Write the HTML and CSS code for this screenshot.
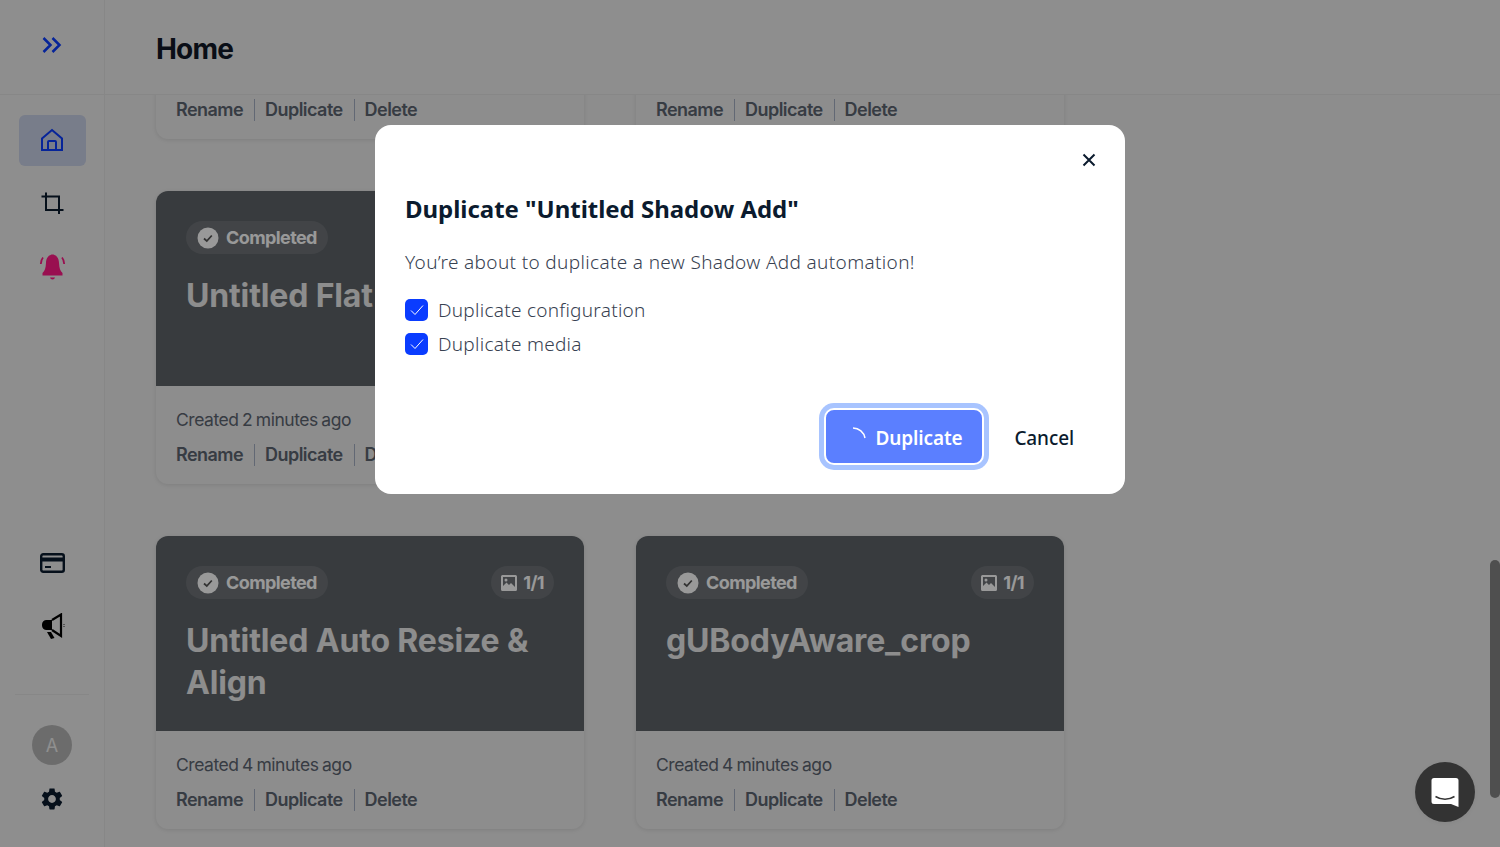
FILE: index.html
```html
<!DOCTYPE html>
<html lang="en">
<head>
    <meta charset="UTF-8">
    <meta name="viewport" content="width=device-width, initial-scale=1.0">
    <title>Home</title>
    <link rel="stylesheet" href="styles.css">
</head>
<body>

    <div class="layout">
        <div class="brand">
            <svg class="icon-blue" width="24" height="24" viewBox="0 0 24 24" fill="none" stroke="currentColor" stroke-width="2.500"><path d="M3.500 5l7 7-7 7M12.500 5l7 7-7 7"/></svg>
        </div>
        <header class="topbar">
            <h1>Home</h1>
        </header>

        <aside class="sidebar">
            <nav class="nav-top">
                <a class="nav-item active">
                    <svg class="icon-blue" width="24" height="24" viewBox="0 0 24 24" fill="none" stroke="currentColor" stroke-width="2"><path d="M2 10.500L12 2l10 8.500V22H2zM8 22V14a1 1 0 0 1 1-1h6a1 1 0 0 1 1 1V22"/></svg>
                </a>
                <a class="nav-item">
                    <svg class="icon-dark" width="24" height="24" viewBox="0 0 24 24" fill="none" stroke="currentColor" stroke-width="2"><path d="M6 1.500V19H23.500M1.500 5.500H19V23"/></svg>
                </a>
                <a class="nav-item">
                    <svg class="icon-pink" width="28" height="28" viewBox="0 0 28 28" fill="currentColor"><path d="M14.500 2.500c3.500 0 6.500 3.500 6.500 8.500.3 5 1.200 8 3.500 10v2.500h-20V21c2.300-2 3.200-5 3.500-10 0-5 3-8.500 6.500-8.500z"/><path d="M12 25.500h5c-.3 1.300-1.300 2-2.500 2s-2.200-.7-2.500-2z"/><path d="M5 5.500c-1.300 1.500-2 3.500-2.200 6.500M24 5.500c1.300 1.500 2 3.500 2.200 6.500" fill="none" stroke="currentColor" stroke-width="1.800"/></svg>
                </a>
            </nav>
            <div class="nav-bottom">
                <a class="nav-item-plain billing">
                    <svg class="icon-dark" width="25" height="22" viewBox="0 0 25 22"><rect x="1.200" y="2.200" width="22.600" height="17.600" rx="2" fill="none" stroke="currentColor" stroke-width="2.400"/><rect x="1" y="5.500" width="23" height="4" fill="currentColor"/><rect x="5" y="14" width="6" height="2" fill="currentColor"/></svg>
                </a>
                <a class="nav-item-plain news">
                    <svg class="icon-black" width="26" height="26" viewBox="0 0 26 26" fill="currentColor"><path d="M13 7H7.500A4.500 4.500 0 0 0 3 11.500v1A4.500 4.500 0 0 0 7.500 17H13z"/><path d="M13 7l9-5.500V23l-9-6" fill="none" stroke="currentColor" stroke-width="2.200"/><path d="M8 19h4l3.500 6-3.500 1z"/><path d="M25 11v1M25 13v1" stroke="currentColor" stroke-width=".8"/></svg>
                </a>
                <div class="nav-divider"></div>
                <div class="avatar">A</div>
                <a class="nav-item-plain">
                    <svg class="icon-dark" width="26" height="26" viewBox="0 0 24 24" fill="currentColor"><path d="M19.140 12.940c.04-.3.06-.61.06-.94 0-.32-.02-.64-.07-.94l2.030-1.580c.18-.14.23-.41.12-.61l-1.920-3.320c-.12-.22-.37-.29-.59-.22l-2.390.96c-.5-.38-1.030-.7-1.620-.94l-.36-2.540c-.04-.24-.24-.41-.48-.41h-3.840c-.24 0-.43.17-.47.41l-.36 2.540c-.59.24-1.130.57-1.620.94l-2.390-.96c-.22-.08-.47 0-.59.22L2.740 8.870c-.12.21-.08.47.12.61l2.030 1.580c-.05.3-.09.63-.09.94s.02.64.07.94l-2.030 1.580c-.18.14-.23.41-.12.61l1.920 3.320c.12.22.37.29.59.22l2.390-.96c.5.38 1.030.7 1.620.94l.36 2.540c.05.24.24.41.48.41h3.840c.24 0 .44-.17.47-.41l.36-2.540c.59-.24 1.130-.56 1.620-.94l2.390.96c.22.08.47 0 .59-.22l1.920-3.320c.12-.22.07-.47-.12-.61l-2.010-1.580zM12 15.600c-1.980 0-3.600-1.620-3.600-3.600s1.620-3.600 3.600-3.600 3.600 1.620 3.600 3.600-1.620 3.600-3.600 3.600z"/></svg>
                </a>
            </div>
        </aside>

        <main class="content">
            <div class="card-grid">
                <div class="card">
                    <div class="card-top"></div>
                    <div class="card-info">
                        <p class="created"></p>
                        <div class="actions"><a>Rename</a><a>Duplicate</a><a>Delete</a></div>
                    </div>
                </div>
                <div class="card">
                    <div class="card-top"></div>
                    <div class="card-info">
                        <p class="created"></p>
                        <div class="actions"><a>Rename</a><a>Duplicate</a><a>Delete</a></div>
                    </div>
                </div>

                <div class="card">
                    <div class="card-top">
                        <div class="card-badges">
                            <span class="pill status">
                                <svg width="22" height="22" viewBox="0 0 22 22"><circle cx="11" cy="11" r="10.500" fill="#fff"/><path d="M7 11.500l2.800 2.500 5-5.500" fill="none" stroke="#555" stroke-width="1.800"/></svg>
                                Completed
                            </span>
                        </div>
                        <h2>Untitled Flat</h2>
                    </div>
                    <div class="card-info">
                        <p class="created">Created 2 minutes ago</p>
                        <div class="actions"><a>Rename</a><a>Duplicate</a><a>Delete</a></div>
                    </div>
                </div>
                <div class="card">
                    <div class="card-top"></div>
                    <div class="card-info"></div>
                </div>

                <div class="card">
                    <div class="card-top">
                        <div class="card-badges">
                            <span class="pill status">
                                <svg width="22" height="22" viewBox="0 0 22 22"><circle cx="11" cy="11" r="10.500" fill="#fff"/><path d="M7 11.500l2.800 2.500 5-5.500" fill="none" stroke="#555" stroke-width="1.800"/></svg>
                                Completed
                            </span>
                            <span class="pill count">
                                <svg width="16" height="16" viewBox="0 0 16 16"><path fill="#fff" fill-rule="evenodd" d="M1.500 0h13A1.500 1.500 0 0 1 16 1.500v13a1.500 1.500 0 0 1-1.500 1.500h-13A1.500 1.500 0 0 1 0 14.500v-13A1.500 1.500 0 0 1 1.500 0zM2 2v9l3.500-3.500L8 10l2-2 4 4V2zM5 3.500a1.500 1.500 0 1 1 0 3 1.500 1.500 0 0 1 0-3z"/></svg>
                                1/1
                            </span>
                        </div>
                        <h2>Untitled Auto Resize &amp; Align</h2>
                    </div>
                    <div class="card-info">
                        <p class="created">Created 4 minutes ago</p>
                        <div class="actions"><a>Rename</a><a>Duplicate</a><a>Delete</a></div>
                    </div>
                </div>
                <div class="card">
                    <div class="card-top">
                        <div class="card-badges">
                            <span class="pill status">
                                <svg width="22" height="22" viewBox="0 0 22 22"><circle cx="11" cy="11" r="10.500" fill="#fff"/><path d="M7 11.500l2.800 2.500 5-5.500" fill="none" stroke="#555" stroke-width="1.800"/></svg>
                                Completed
                            </span>
                            <span class="pill count">
                                <svg width="16" height="16" viewBox="0 0 16 16"><path fill="#fff" fill-rule="evenodd" d="M1.500 0h13A1.500 1.500 0 0 1 16 1.500v13a1.500 1.500 0 0 1-1.500 1.500h-13A1.500 1.500 0 0 1 0 14.500v-13A1.500 1.500 0 0 1 1.500 0zM2 2v9l3.500-3.500L8 10l2-2 4 4V2zM5 3.500a1.500 1.500 0 1 1 0 3 1.500 1.500 0 0 1 0-3z"/></svg>
                                1/1
                            </span>
                        </div>
                        <h2>gUBodyAware_crop</h2>
                    </div>
                    <div class="card-info">
                        <p class="created">Created 4 minutes ago</p>
                        <div class="actions"><a>Rename</a><a>Duplicate</a><a>Delete</a></div>
                    </div>
                </div>
            </div>
        </main>
    </div>

    <div class="overlay">
        <div class="modal">
            <button class="close-btn" aria-label="Close">
                <svg width="14" height="14" viewBox="0 0 14 14" fill="none" stroke="currentColor" stroke-width="2"><path d="M1.500 1.500l11 11M12.500 1.500l-11 11"/></svg>
            </button>
            <h3>Duplicate "Untitled Shadow Add"</h3>
            <p class="modal-text">You’re about to duplicate a new Shadow Add automation!</p>
            <label class="check-row">
                <span class="check-box"><svg width="14" height="12" viewBox="0 0 14 12" fill="none" stroke="#fff" stroke-width="1"><path d="M1 6.500l4 4L13 1.500"/></svg></span>
                Duplicate configuration
            </label>
            <label class="check-row">
                <span class="check-box"><svg width="14" height="12" viewBox="0 0 14 12" fill="none" stroke="#fff" stroke-width="1"><path d="M1 6.500l4 4L13 1.500"/></svg></span>
                Duplicate media
            </label>
            <div class="modal-buttons">
                <button class="btn-primary">
                    <svg width="20" height="20" viewBox="0 0 20 20" fill="none" stroke="#fff" stroke-width="1.500"><path d="M4 1c6 0 11 4.500 12 10"/></svg>
                    Duplicate
                </button>
                <button class="btn-cancel">Cancel</button>
            </div>
        </div>
    </div>

    <div class="scroll-thumb"></div>
    <div class="chat-launcher">
        <svg width="28" height="31" viewBox="0 0 28 31"><path fill="#fff" d="M3 1h22a2.500 2.500 0 0 1 2.500 2.500V30l-7.500-3H3a2.500 2.500 0 0 1-2.500-2.500v-21A2.500 2.500 0 0 1 3 1z"/><path d="M4.500 19.500c5.500 3.500 13.500 3.500 19 0" fill="none" stroke="#333" stroke-width="1.500"/></svg>
    </div>

</body>
</html>
```

FILE: styles.css
```css
* {
    box-sizing: border-box;
}

html, body {
    height: 100%;
}

body {
    margin: 0;
    overflow: hidden;
    font-family: Inter, "Liberation Sans", sans-serif;
    background-color: #ebebeb;
    color: #111827;
}

.layout {
    display: grid;
    grid-template-columns: 105px 1fr;
    grid-template-rows: 95px 1fr;
    height: 847px;
}

.brand, .topbar {
    display: flex;
    align-items: center;
    background-color: #ededed;
    border-bottom: 1px solid #e2e2e2;
    position: relative;
    z-index: 2;
}

.brand {
    justify-content: center;
    padding-bottom: 5px;
    border-right: 1px solid #e2e2e2;
}

.topbar {
    padding-left: 51px;
}

.topbar h1 {
    margin: 0;
    padding-top: 3px;
    font-size: 28px;
    font-weight: 700;
    letter-spacing: -0.8px;
}

.icon-blue { color: #0a3cff; }
.icon-dark { color: #0b1b2e; }
.icon-black { color: #000; }
.icon-pink { color: #ff1a85; }

.sidebar {
    display: flex;
    flex-direction: column;
    justify-content: space-between;
    background-color: #ededed;
    border-right: 1px solid #e2e2e2;
    position: relative;
    z-index: 2;
}

.nav-top {
    display: flex;
    flex-direction: column;
    gap: 12px;
    padding: 20px 18px 0 19px;
}

.nav-item {
    display: flex;
    align-items: center;
    justify-content: center;
    height: 51px;
    padding: 0 1px 1px 0;
    border-radius: 6px;
}

.nav-item.active {
    background-color: #c8d0e6;
}

.nav-bottom {
    display: flex;
    flex-direction: column;
    align-items: center;
    padding-bottom: 35px;
}

.nav-item-plain {
    display: flex;
}

.billing {
    margin-bottom: 39px;
}

.news {
    margin-bottom: 55px;
}

.nav-divider {
    width: 74px;
    height: 1px;
    background-color: #e2e2e2;
    margin-bottom: 30px;
}

.avatar {
    width: 40px;
    height: 40px;
    border-radius: 50%;
    display: flex;
    align-items: center;
    justify-content: center;
    background-color: #b5b5b5;
    color: #eee;
    font-size: 18px;
    margin-bottom: 21px;
}

.content {
    padding-left: 51px;
    overflow: hidden;
}

.card-grid {
    display: grid;
    grid-template-columns: repeat(2, 428px);
    gap: 52px;
    margin-top: -249px;
}

.card {
    height: 293px;
    border-radius: 12px;
    overflow: hidden;
    background-color: #ebebeb;
    box-shadow: 0 1px 4px rgba(0, 0, 0, 0.1);
}

.card-top {
    height: 195px;
    padding: 30px;
    background-color: #5e6368;
}

.card-badges {
    display: flex;
    justify-content: space-between;
    margin-bottom: 21px;
}

.pill {
    display: inline-flex;
    align-items: center;
    height: 33px;
    border-radius: 17px;
    background-color: rgba(255, 255, 255, 0.1);
    color: #fff;
    font-size: 18px;
    font-weight: 700;
    letter-spacing: -0.6px;
}

.pill.status {
    gap: 7px;
    padding: 0 11px;
}

.pill.count {
    gap: 6px;
    padding: 0 10px 0 10px;
}

.card-top h2 {
    margin: 0;
    color: #ebebeb;
    font-size: 32px;
    font-weight: 700;
    line-height: 42px;
    letter-spacing: -0.15px;
}

.card-info {
    padding: 22px 20px;
}

.created {
    height: 24px;
    margin: 0 0 12px;
    font-size: 17.500px;
    line-height: 24px;
    color: #5c6470;
    letter-spacing: -0.45px;
    word-spacing: -1px;
}

.actions {
    display: flex;
    font-size: 18px;
    font-weight: 600;
    line-height: 22px;
    color: #5c6470;
    letter-spacing: -0.55px;
}

.actions a {
    padding: 0 11px 0 10px;
    border-right: 1px solid #a3aec2;
}

.actions a:first-child {
    padding-left: 0;
}

.actions a:last-child {
    border-right: none;
}

.overlay {
    position: fixed;
    inset: 0;
    z-index: 5;
    display: flex;
    justify-content: center;
    align-items: flex-start;
    padding-top: 125px;
    background-color: rgba(0, 0, 0, 0.4);
}

.modal {
    position: relative;
    width: 750px;
    height: 369px;
    padding: 64px 30px 0;
    border-radius: 16px;
    background-color: white;
    font-family: "Noto Sans", sans-serif;
}

.close-btn {
    position: absolute;
    top: 28px;
    right: 29px;
    display: flex;
    padding: 0;
    border: none;
    background: none;
    color: #0b1b2e;
}

.modal h3 {
    margin: 0 0 18px;
    font-size: 24px;
    font-weight: 700;
    line-height: 40px;
    letter-spacing: -0.03px;
    color: #0b1b2e;
}

.modal-text {
    margin: 0 0 16px;
    font-size: 19px;
    font-weight: 300;
    line-height: 30px;
    letter-spacing: 0.35px;
    color: #374151;
}

.check-row {
    display: flex;
    align-items: center;
    gap: 10px;
    height: 34px;
    font-size: 19px;
    font-weight: 300;
    letter-spacing: 0.27px;
    color: #374151;
}

.check-box {
    display: flex;
    align-items: center;
    justify-content: center;
    width: 23px;
    height: 22px;
    margin-top: -1px;
    border-radius: 5px;
    background-color: #0a3cff;
}

.modal-buttons {
    position: absolute;
    right: 51px;
    bottom: 29px;
    display: flex;
    align-items: center;
    gap: 30px;
}

.btn-primary {
    display: flex;
    align-items: center;
    gap: 6px;
    width: 160px;
    height: 57px;
    padding: 3px 0 0 23px;
    border: 2px solid white;
    border-radius: 10px;
    background-color: #5b7fff;
    box-shadow: 0 0 0 5px #a8c4ff;
    color: white;
    font-family: inherit;
    font-size: 19px;
    font-weight: 600;
    letter-spacing: -0.1px;
}

.btn-primary svg {
    margin-top: -3px;
}

.btn-cancel {
    padding: 3px 0 0;
    border: none;
    background: none;
    color: #0b1b2e;
    font-family: inherit;
    font-size: 19px;
    font-weight: 500;
    letter-spacing: -0.1px;
}

.scroll-thumb {
    position: fixed;
    z-index: 6;
    top: 560px;
    right: 0;
    width: 10px;
    height: 238px;
    border-radius: 5px;
    background-color: #4f4f4f;
}

.chat-launcher {
    position: fixed;
    z-index: 6;
    top: 762px;
    left: 1415px;
    width: 60px;
    height: 60px;
    border-radius: 50%;
    display: flex;
    align-items: center;
    justify-content: center;
    background-color: #333;
    box-shadow: 0 1px 6px rgba(0, 0, 0, 0.06);
}
```
